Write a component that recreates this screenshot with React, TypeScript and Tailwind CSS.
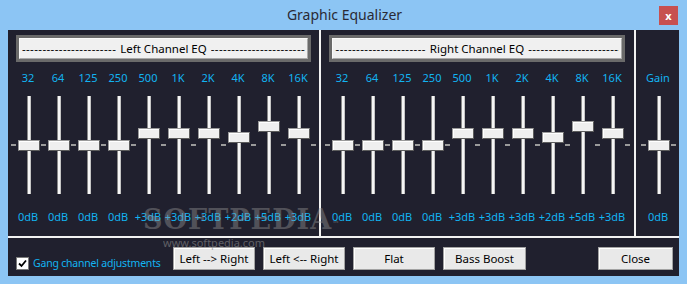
import React from "react";

const FREQS = ["32", "64", "125", "250", "500", "1K", "2K", "4K", "8K", "16K"];
const LEFT = [0, 0, 0, 0, 3, 3, 3, 2, 5, 3];
const RIGHT = [0, 0, 0, 0, 3, 3, 3, 2, 5, 3];

const dbText = (v: number) => (v > 0 ? `+${v}dB` : `${v}dB`);

function Slider({ value, last }: { value: number; last?: boolean }) {
  // 98px track, center at 49, ~3.8px per dB
  const top = 49 - 5.5 - value * 3.8;
  return (
    <div className="relative flex h-[98px] w-[30px] justify-center">
      <div className="absolute left-[-2px] top-[48px] h-[2px] w-[5px] bg-[#9b9b9b]" />
      {last && <div className="absolute right-[-3px] top-[48px] h-[2px] w-[5px] bg-[#9b9b9b]" />}
      <div className="ml-[2px] h-full w-[4px] border-l border-r border-l-[#8a8a8a] border-r-[#c4c4c4] bg-[#f6f6f6]" />
      <div
        className="absolute left-[5px] h-[11px] w-[22px] border border-[#9a9a9a] border-b-[#5c5c5c] border-r-[#5c5c5c] bg-[#efefef] shadow-[inset_1px_1px_0_#ffffff]"
        style={{ top }}
      />
    </div>
  );
}

function ChannelHeader({ label }: { label: string }) {
  const dashes = "-".repeat(60);
  return (
    <div className="h-[27px] border-[3px] border-[#6a6a6a] bg-[#6a6a6a]">
      <div className="flex h-full items-center gap-[4px] border border-[#fafafa] border-b-[#a8a8a8] border-r-[#a8a8a8] bg-[#f0f0f0] px-[2px] text-[11.5px] leading-none text-black">
        <div className="flex flex-1 justify-end overflow-hidden whitespace-nowrap tracking-[0.4px]">
          <span>{dashes}</span>
        </div>
        <span className="whitespace-nowrap">{label}</span>
        <div className="flex flex-1 justify-start overflow-hidden whitespace-nowrap tracking-[0.4px]">
          <span>{dashes}</span>
        </div>
      </div>
    </div>
  );
}

function Channel({ label, values, pl, mr }: { label: string; values: number[]; pl: string; mr: string }) {
  return (
    <div className="flex flex-col pt-[5px]">
      <div className={`ml-[8px] ${mr}`}>
        <ChannelHeader label={label} />
      </div>
      <div className={`mt-[8px] flex ${pl}`}>
        {FREQS.map((f) => (
          <div key={f} className="w-[30px] text-center text-[11px] leading-[16px] text-[#12b4f2]">
            {f}
          </div>
        ))}
      </div>
      <div className={`mt-[10px] flex ${pl}`}>
        {values.map((v, i) => (
          <Slider key={i} value={v} last={i === values.length - 1} />
        ))}
      </div>
      <div className={`mt-[15px] flex ${pl}`}>
        {values.map((v, i) => (
          <div key={i} className="w-[30px] whitespace-nowrap text-center text-[11px] leading-[16px] text-[#12b4f2]">
            {dbText(v)}
          </div>
        ))}
      </div>
    </div>
  );
}

function WinButton({ children, w }: { children: React.ReactNode; w: string }) {
  return (
    <button
      className={`${w} h-[23px] border border-[#a3a3a3] bg-[#e9e9e9] text-[11.5px] leading-none text-black shadow-[inset_1px_1px_0_#ffffff]`}
    >
      {children}
    </button>
  );
}

export default function App() {
  return (
    <div className="relative h-[284px] w-[687px] overflow-hidden bg-[#8cc5f4] font-['Noto_Sans',sans-serif]">
      {/* title bar */}
      <div className="grid h-[30px] grid-cols-[1fr_auto_1fr] items-center">
        <div />
        <div className="pl-[2px] text-[14px] leading-none text-[#2a2a35]">Graphic Equalizer</div>
        <div className="flex justify-end pr-[9px]">
          <div className="mt-[1px] flex h-[19px] w-[19px] items-center justify-center bg-[#c75050] text-[11px] font-bold leading-none text-white">
            x
          </div>
        </div>
      </div>

      {/* client area */}
      <div className="mx-[8px] flex h-[246px] flex-col bg-[#20202e]">
        <div className="flex h-[206px]">
          <div className="w-[311px]">
            <Channel label="Left Channel EQ" values={LEFT} pl="pl-[5px]" mr="mr-[8px]" />
          </div>
          <div className="w-[2px] bg-[#f2f2f2]" />
          <div className="w-[313px]">
            <Channel label="Right Channel EQ" values={RIGHT} pl="pl-[6px]" mr="mr-[9px]" />
          </div>
          <div className="w-[2px] bg-[#f2f2f2]" />
          <div className="flex w-[43px] flex-col pl-[7px] pt-[40px]">
            <div className="w-[30px] text-center text-[11px] leading-[16px] text-[#12b4f2]">Gain</div>
            <div className="mt-[10px]">
              <Slider value={0} last />
            </div>
            <div className="mt-[15px] w-[30px] text-center text-[11px] leading-[16px] text-[#12b4f2]">0dB</div>
          </div>
        </div>
        <div className="h-[2px] bg-[#f2f2f2]" />

        {/* bottom controls */}
        <div className="flex h-[38px] items-start pl-[8px]">
          <label className="mt-[19px] flex w-[157px] items-center gap-[4px]">
            <span className="flex h-[13px] w-[13px] shrink-0 items-center justify-center border border-[#7a7a7a] bg-white">
              <svg width="9" height="9" viewBox="0 0 9 9">
                <path d="M1 4.5 L3.5 7 L8 1.5" stroke="#000" strokeWidth="1.8" fill="none" />
              </svg>
            </span>
            <span className="whitespace-nowrap text-[10.5px] leading-none tracking-[-0.2px] text-[#12b4f2]">
              Gang channel adjustments
            </span>
          </label>
          <div className="mt-[9px] flex gap-[8px]">
            <WinButton w="w-[82px]">Left --&gt; Right</WinButton>
            <WinButton w="w-[82px]">Left &lt;-- Right</WinButton>
            <WinButton w="w-[82px]">Flat</WinButton>
            <WinButton w="w-[83px]">Bass Boost</WinButton>
          </div>
          <div className="ml-[72px] mt-[9px] flex">
            <WinButton w="w-[75px]">Close</WinButton>
          </div>
        </div>
      </div>

      {/* watermark */}
      <div className="pointer-events-none absolute left-[143px] top-[200px] select-none font-['DejaVu_Serif',serif] text-[27px] font-bold tracking-[1px] text-[#9a9a9a] opacity-40">
        SOFTPEDIA<sup className="text-[7px]">™</sup>
      </div>
      <div className="pointer-events-none absolute left-[163px] top-[237px] select-none text-[11px] leading-none text-[#8a8a8a] opacity-60">
        www.softpedia.com
      </div>
    </div>
  );
}
